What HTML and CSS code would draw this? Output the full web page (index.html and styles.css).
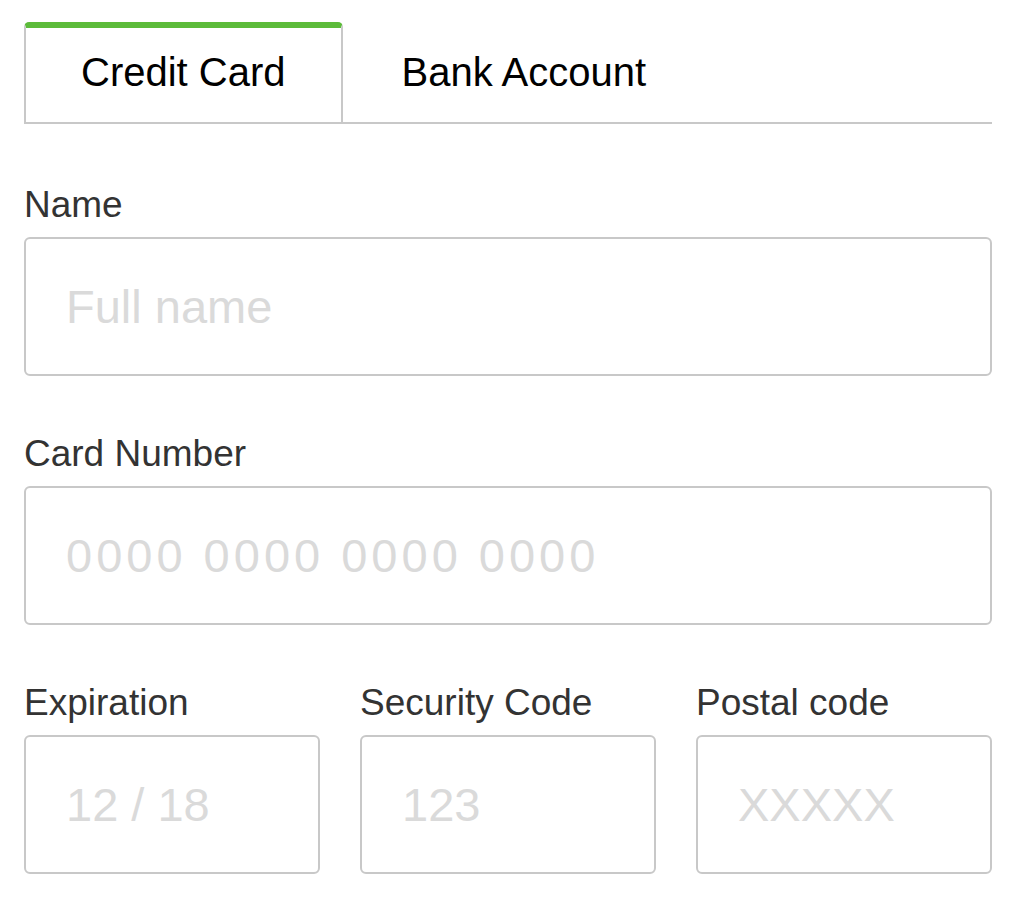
FILE: index.html
```html
<!DOCTYPE html>
<html lang="en">
<head>
    <meta charset="UTF-8">
    <title>Payment</title>
    <link rel="stylesheet" href="styles.css">
</head>
<body>
<div class="pay">
    <div class="tabs">
        <span class="tab active">Credit Card</span>
        <span class="tab">Bank Account</span>
    </div>

    <form class="form">
        <div class="field">
            <label for="name">Name</label>
            <input id="name" type="text" placeholder="Full name">
        </div>
        <div class="field">
            <label for="card">Card Number</label>
            <input id="card" class="digits" type="text" placeholder="0000 0000 0000 0000">
        </div>
        <div class="row">
            <div class="field">
                <label for="exp">Expiration</label>
                <input id="exp" type="text" placeholder="12 / 18">
            </div>
            <div class="field">
                <label for="cvc">Security Code</label>
                <input id="cvc" type="text" placeholder="123">
            </div>
            <div class="field">
                <label for="zip">Postal code</label>
                <input id="zip" type="text" placeholder="XXXXX">
            </div>
        </div>
    </form>
</div>
</body>
</html>
```

FILE: styles.css
```css
*{
    margin: 0;
    padding: 0;
    box-sizing: border-box;
}
body{
    background: #fff;
    font-family: "Liberation Sans", Arial, sans-serif;
}
.pay{
    width: 968px;
    margin-left: 24px;
    padding-top: 22px;
}
.tabs{
    display: flex;
    border-bottom: 2px solid #c8c8c8;
}
.tab{
    display: block;
    padding: 0 57px 6px;
    border: 2px solid transparent;
    border-top-width: 6px;
    border-bottom: 0;
    line-height: 88px;
    font-size: 40px;
    color: #000;
}
.tab.active{
    padding: 0 55px 6px;
    background: #fff;
    border-color: #c8c8c8;
    border-top-color: #5cbb3a;
    border-radius: 5px 5px 0 0;
    margin-bottom: -2px;
    height: 100px;
}
.form{
    padding-top: 60px;
}
.field{
    margin-bottom: 57px;
}
.row{
    display: flex;
    gap: 40px;
}
.row .field{
    flex: 1;
}
label{
    display: block;
    font-size: 37px;
    line-height: 42px;
    color: #333;
    margin-bottom: 11px;
}
input{
    display: block;
    width: 100%;
    height: 139px;
    padding: 0 40px;
    border: 2px solid #c8c8c8;
    border-radius: 6px;
    font-family: "Liberation Sans", Arial, sans-serif;
    font-size: 47px;
    color: #333;
    outline: none;
}
input::placeholder{
    color: #dadada;
}
.digits{
    letter-spacing: 4px;
}
```
